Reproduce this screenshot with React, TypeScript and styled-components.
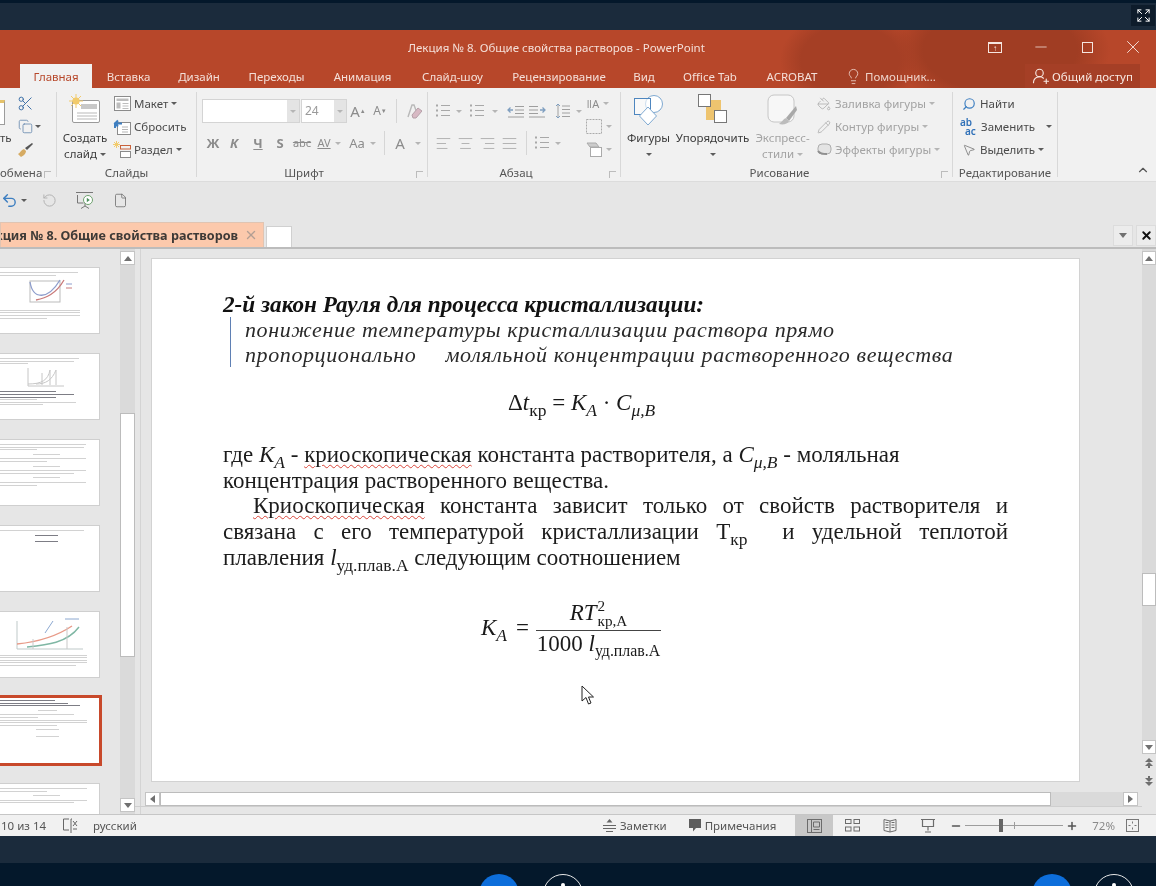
import styled, { createGlobalStyle } from 'styled-components';
import {
  AlignCenter, AlignJustify, AlignLeft, AlignRight, ChevronUp, Copy, Expand, File, Lightbulb,
  Minus, MousePointer2, PaintBucket, Pencil, Plus, RotateCcw, Scissors, Search,
  Undo2, UserRoundPlus, X,
} from 'lucide-react';

const GlobalStyle = createGlobalStyle`
  html, body { margin: 0; padding: 0; background: #04182b; }
  * { box-sizing: border-box; }
`;

const Page = styled.div`
  width: 1156px;
  height: 886px;
  overflow: hidden;
  display: flex;
  flex-direction: column;
  font-family: "Noto Sans", "Open Sans", sans-serif;
  font-size: 11.5px;
  color: #444;
  background: #1b2b3c;
  filter: blur(0.35px);
`;

const TopEdge = styled.div`
  height: 3px;
  background: #04182b;
`;

const MeetingBar = styled.div`
  height: 27px;
  display: flex;
  justify-content: flex-end;
  align-items: flex-start;
  padding: 2px 1px 0 0;
  background: #1b2b3c;
`;

const FullscreenButton = styled.div`
  width: 24px;
  height: 21px;
  display: flex;
  align-items: center;
  justify-content: center;
  background: #0e1c2b;
  color: #fff;
`;

const WindowChrome = styled.div`
  height: 58px;
  display: flex;
  flex-direction: column;
  color: #f4dfd8;
  background:
    radial-gradient(ellipse 70px 50px at 850px 30px, #a53f25 0 70%, transparent 100%),
    radial-gradient(ellipse 110px 60px at 1000px 20px, #a03d23 0 70%, transparent 100%),
    #b7472a;
`;

const TitleBar = styled.div`
  height: 34px;
  display: flex;
  align-items: center;
  padding-left: 408px;
`;

const WindowControls = styled.div`
  margin-left: auto;
  display: flex;
`;

const WindowButton = styled.div`
  width: 46px;
  height: 30px;
  display: flex;
  align-items: center;
  justify-content: center;
  color: #f6e6e0;
`;

const RestoreRibbon = styled.div`
  width: 14px;
  height: 11px;
  border: 1px solid #f6e6e0;
  border-top-width: 2px;
  display: flex;
  align-items: center;
  justify-content: center;
  font-size: 8px;
  line-height: 8px;
`;

const MaximizeBox = styled.div`
  width: 11px;
  height: 11px;
  border: 1px solid #f6e6e0;
`;

const TabsRow = styled.div`
  height: 24px;
  display: flex;
  padding-left: 20px;
`;

const Tab = styled.div<{ $w: number; $active?: boolean }>`
  width: ${(p) => p.$w}px;
  display: flex;
  align-items: center;
  justify-content: center;
  white-space: nowrap;
  ${(p) => p.$active && 'background: #f1f1f1; color: #b7472a;'}
`;

const TellMe = styled.div`
  width: 112px;
  display: flex;
  align-items: center;
  gap: 3px;
  padding-left: 11px;
  color: #eed2c9;
`;

const ShareButton = styled.div`
  margin-left: auto;
  margin-right: 16px;
  width: 115px;
  display: flex;
  align-items: center;
  justify-content: center;
  gap: 2px;
  background: #a53f26;
  color: #f8e8e2;
`;

const Ribbon = styled.div`
  height: 94px;
  display: flex;
  align-items: flex-start;
  padding-top: 4px;
  background: #f1f1f1;
  border-bottom: 1px solid #dcdcdc;
`;

const Group = styled.div<{ $w: number }>`
  position: relative;
  width: ${(p) => p.$w}px;
  height: 85px;
  display: flex;
  flex-direction: column;
  border-right: 1px solid #d8d8d8;
`;

const GroupBody = styled.div<{ $pl?: number }>`
  height: 73px;
  display: flex;
  padding-left: ${(p) => p.$pl ?? 0}px;
`;

const GroupLabel = styled.div<{ $pr?: number }>`
  height: 12px;
  line-height: 16px;
  text-align: center;
  padding-right: ${(p) => p.$pr ?? 0}px;
  white-space: nowrap;
  color: #555;
`;

const ClippedLabel = styled(GroupLabel)`
  text-align: left;
`;

const Launcher = styled.div<{ $r?: number }>`
  position: absolute;
  right: ${(p) => p.$r ?? 4}px;
  bottom: -1px;
  width: 7px;
  height: 7px;
  border-left: 1px solid #bcbcbc;
  border-top: 1px solid #bcbcbc;
`;

const Column = styled.div<{ $w?: number }>`
  ${(p) => p.$w && `width: ${p.$w}px;`}
  display: flex;
  flex-direction: column;
`;

const Row = styled.div<{ $gap?: number; $muted?: boolean }>`
  height: 23px;
  display: flex;
  align-items: center;
  gap: ${(p) => p.$gap ?? 3}px;
  white-space: nowrap;
  color: ${(p) => (p.$muted ? '#a3a3a3' : '#4a4a4a')};
`;

const IconSlot = styled.div<{ $w: number; $ml?: number }>`
  width: ${(p) => p.$w}px;
  margin-left: ${(p) => p.$ml ?? 0}px;
  flex: none;
  display: flex;
  align-items: center;
  justify-content: center;
  svg { flex: none; }
`;

const ClippedText = styled.div`
  height: 16px;
  line-height: 16px;
  margin-top: 5px;
`;

const PastePiece = styled.div`
  width: 5px;
  height: 25px;
  margin-top: 8px;
  background: #fff;
  border: 1px solid #9c9c9c;
  border-left: none;
  border-top: 3px solid #e5c26a;
`;

const BigButton = styled.div<{ $w: number; $muted?: boolean }>`
  width: ${(p) => p.$w}px;
  flex: none;
  display: flex;
  flex-direction: column;
  align-items: center;
  color: ${(p) => (p.$muted ? '#a3a3a3' : '#3c3c3c')};
  line-height: 16px;
  white-space: nowrap;
`;

const BigIcon = styled.div`
  height: 38px;
  padding-top: 2px;
  display: flex;
  align-items: flex-start;
  justify-content: center;
`;

const CaretLine = styled.div`
  height: 16px;
  display: flex;
  align-items: center;
`;

const Caret = styled.span<{ $light?: boolean }>`
  display: inline-block;
  width: 0;
  height: 0;
  border-left: 3px solid transparent;
  border-right: 3px solid transparent;
  border-top: 3px solid ${(p) => (p.$light ? '#b5b5b5' : '#5c5c5c')};
  vertical-align: middle;
`;

const FormatRows = styled.div<{ $w?: number }>`
  ${(p) => p.$w && `width: ${p.$w}px;`}
  display: flex;
  flex-direction: column;
  gap: 8px;
  padding-top: 7px;
`;

const FormatRow = styled.div`
  height: 24px;
  display: flex;
  align-items: center;
  color: #9a9a9a;
`;

const ComboBox = styled.div<{ $w: number; $ml?: number }>`
  width: ${(p) => p.$w}px;
  margin-left: ${(p) => p.$ml ?? 0}px;
  height: 24px;
  flex: none;
  display: flex;
  justify-content: flex-end;
  background: #fff;
  border: 1px solid #d4d4d4;
`;

const ComboValue = styled.div`
  flex: 1;
  padding-left: 3px;
  font-size: 12px;
  line-height: 22px;
  color: #9a9a9a;
`;

const ComboArrow = styled.div`
  width: 12px;
  display: flex;
  align-items: center;
  justify-content: center;
  background: #e4e4e4;
`;

const FormatGlyph = styled.span<{ $size?: number; $bold?: boolean; $italic?: boolean; $under?: boolean; $strike?: boolean }>`
  font-size: ${(p) => p.$size ?? 13}px;
  font-weight: ${(p) => (p.$bold ? 700 : 400)};
  font-style: ${(p) => (p.$italic ? 'italic' : 'normal')};
  text-decoration: ${(p) => (p.$under ? 'underline' : p.$strike ? 'line-through' : 'none')};
  line-height: 14px;
  color: #8c8c8c;
`;

const VSep = styled.div<{ $ml?: number; $h?: number }>`
  width: 1px;
  height: ${(p) => p.$h ?? 24}px;
  margin-left: ${(p) => p.$ml ?? 0}px;
  background: #d6d6d6;
  flex: none;
`;

const SideIcons = styled.div`
  width: 35px;
  display: flex;
  flex-direction: column;
`;

const SideIcon = styled.div`
  height: 23px;
  display: flex;
  align-items: center;
  gap: 4px;
  padding-left: 1px;
`;

const ReplaceGlyph = styled.div`
  width: 18px;
  font-size: 10px;
  line-height: 9px;
  font-weight: 600;
  color: #2f70b8;
  flex: none;
`;

const ReplaceSecond = styled.div`
  padding-left: 5px;
`;

const FlippedSearch = styled(Search)`
  transform: scaleX(-1);
`;

const CollapseArea = styled.div`
  flex: 1;
  height: 85px;
  display: flex;
  align-items: flex-end;
  justify-content: flex-end;
  padding-right: 6px;
  color: #555;
`;

const QuickBar = styled.div`
  height: 40px;
  display: flex;
  align-items: center;
  padding-bottom: 4px;
  background: #e6e6e6;
  color: #6c6c6c;
`;

const DocTabs = styled.div`
  height: 27px;
  display: flex;
  align-items: flex-end;
  background: #e6e6e6;
  border-bottom: 2px solid #bcbcbc;
`;

const DocTab = styled.div`
  width: 264px;
  height: 25px;
  display: flex;
  justify-content: flex-end;
  align-items: center;
  gap: 6px;
  padding-right: 5px;
  overflow: hidden;
  white-space: nowrap;
  background: #fcc9ac;
  border: 1px solid #e0c4b2;
  border-bottom: none;
  font-weight: 700;
  font-size: 12.6px;
  color: #3e3a37;
  svg { flex: none; }
`;

const NewDocTab = styled.div`
  width: 26px;
  height: 21px;
  margin-left: 2px;
  background: #fff;
  border: 1px solid #d0d0d0;
  border-bottom: none;
`;

const DocTabButton = styled.div<{ $first?: boolean }>`
  width: 20px;
  height: 21px;
  margin-left: ${(p) => (p.$first ? 'auto' : '3px')};
  margin-bottom: 1px;
  display: flex;
  align-items: center;
  justify-content: center;
  background: #ececec;
  border: 1px solid #dcdcdc;
  color: #111;
`;

const Workspace = styled.div`
  height: 565px;
  display: flex;
  background: #e6e6e6;
`;

const ThumbPanel = styled.div`
  width: 120px;
  flex: none;
  overflow: hidden;
  display: flex;
  flex-direction: column;
  gap: 19px;
  padding-top: 18px;
`;

const Thumb = styled.div<{ $selected?: boolean }>`
  flex: none;
  height: ${(p) => (p.$selected ? 71 : 67)}px;
  width: ${(p) => (p.$selected ? 102 : 100)}px;
  margin: ${(p) => (p.$selected ? '-2px 0' : 0)};
  padding: ${(p) => (p.$selected ? '2px 4px 0 0' : '4px 6px 0 0')};
  background: #fff;
  border: ${(p) => (p.$selected ? '3px solid #c8492b' : '1px solid #cfcfcf')};
  border-left: none;
  overflow: hidden;
  display: flex;
  flex-direction: column;
  gap: 1.6px;
`;

const ThumbLine = styled.div<{ $w: number; $dark?: boolean; $center?: boolean }>`
  height: 1px;
  flex: none;
  width: ${(p) => p.$w}%;
  ${(p) => p.$center && 'margin: 2px auto;'}
  background: ${(p) => (p.$dark ? '#7d7d85' : '#d2d2d2')};
  filter: blur(0.4px);
`;

const ThumbChart = styled.svg`
  flex: none;
  display: block;
  margin: 1px auto;
  filter: blur(0.4px);
`;

const ScrollTrack = styled.div<{ $w?: number }>`
  width: ${(p) => p.$w ?? 15}px;
  flex: none;
  display: flex;
  flex-direction: column;
  background: #dadada;
`;

const ScrollSpacer = styled.div`
  flex: 1;
`;

const ScrollButton = styled.div<{ $spaced?: boolean }>`
  height: 14px;
  flex: none;
  display: flex;
  align-items: center;
  justify-content: center;
  background: #fff;
  border: 1px solid #c4c4c4;
  margin: ${(p) => (p.$spaced ? '2px 0' : 0)};
`;

const ScrollThumb = styled.div<{ $h: number; $mt: number }>`
  height: ${(p) => p.$h}px;
  margin-top: ${(p) => p.$mt}px;
  flex: none;
  background: #fff;
  border: 1px solid #bcbcbc;
`;

const SlideNav = styled.div`
  height: 60px;
  flex: none;
  display: flex;
  flex-direction: column;
  align-items: center;
  gap: 8px;
  padding-top: 4px;
  background: #e6e6e6;
`;

const Arrow = styled.span<{ $dir: 'up' | 'down' | 'left' | 'right' }>`
  width: 0;
  height: 0;
  ${(p) => ((p.$dir === 'up' || p.$dir === 'down')
    ? `border-left: 4px solid transparent; border-right: 4px solid transparent;
       border-${p.$dir === 'up' ? 'bottom' : 'top'}: 5px solid #707070;`
    : `border-top: 4px solid transparent; border-bottom: 4px solid transparent;
       border-${p.$dir === 'left' ? 'right' : 'left'}: 5px solid #707070;`)}
`;

const Splitter = styled.div`
  width: 10px;
  flex: none;
  display: flex;
  justify-content: center;
  &::after {
    content: '';
    width: 1px;
    background: #d4d4d4;
  }
`;

const SlideColumn = styled.div`
  width: 997px;
  flex: none;
  display: flex;
  flex-direction: column;
  padding-top: 9px;
`;

const Slide = styled.div`
  position: relative;
  width: 929px;
  height: 524px;
  margin-left: 6px;
  padding: 33px 71px 0;
  background: #fff;
  border: 1px solid #d2d2d2;
  color: #1a1a1a;
  font-family: "Liberation Serif", "Times New Roman", serif;
`;

const Heading = styled.div`
  font-size: 23.2px;
  line-height: 25px;
  font-weight: 700;
  font-style: italic;
  color: #111;
  white-space: nowrap;
`;

const Statement = styled.div`
  margin-left: 7px;
  padding-left: 14px;
  border-left: 1px solid #5f80b4;
  font-size: 22px;
  line-height: 25px;
  font-style: italic;
  letter-spacing: 0.6px;
  color: #2a2a2a;
  white-space: nowrap;
`;

const Gap = styled.span`
  display: inline-block;
  width: 29px;
`;

const FormulaRow = styled.div<{ $ml: number; $mt: number }>`
  display: flex;
  align-items: center;
  margin-left: ${(p) => p.$ml}px;
  margin-top: ${(p) => p.$mt}px;
  font-size: 23px;
  line-height: 24px;
  white-space: nowrap;
`;

const Body = styled.div`
  margin-top: 27px;
  font-size: 23px;
  line-height: 25.7px;
  color: #1c1c1c;
`;

const BodyLine = styled.div<{ $justify?: boolean; $indent?: boolean }>`
  height: 25.7px;
  white-space: ${(p) => (p.$justify ? 'normal' : 'nowrap')};
  text-align: ${(p) => (p.$justify ? 'justify' : 'left')};
  text-align-last: ${(p) => (p.$justify ? 'justify' : 'left')};
  text-indent: ${(p) => (p.$indent ? '30px' : 0)};
`;

const Spell = styled.span`
  text-decoration: underline wavy #d9453a 1px;
  text-underline-offset: 2px;
`;

const MathVar = styled.i`
  font-style: italic;
`;

const Sub = styled.sub`
  font-size: 0.76em;
  line-height: 0;
  vertical-align: -0.32em;
`;

const FracSub = styled(Sub)`
  font-size: 0.69em;
`;

const SubSup = styled.span`
  display: inline-flex;
  flex-direction: column;
  margin-left: 1px;
  font-size: 0.66em;
  line-height: 15px;
`;

const FormulaLead = styled.div`
  padding-top: 5px;
`;

const FormulaEq = styled.span`
  margin-left: 9px;
`;

const Fraction = styled.div`
  display: flex;
  flex-direction: column;
  align-items: center;
  margin-left: 7px;
  width: 125px;
`;

const Numerator = styled.div`
  width: 100%;
  height: 37px;
  padding-top: 2px;
  display: flex;
  align-items: center;
  justify-content: center;
  border-bottom: 1px solid #444;
`;

const Denominator = styled.div`
  padding-top: 1px;
`;

const Pointer = styled.div`
  position: absolute;
  left: 429px;
  top: 426px;
  line-height: 0;
`;

const HScroll = styled.div`
  height: 14px;
  width: 993px;
  margin-top: 10px;
  display: flex;
  background: #dadada;
`;

const HButton = styled(ScrollButton)`
  width: 15px;
  height: 14px;
`;

const HThumb = styled.div`
  width: 891px;
  background: #fff;
  border: 1px solid #bcbcbc;
`;

const HRest = styled.div`
  flex: 1;
`;

const HRule = styled.div`
  margin-left: -10px;
  width: 1030px;
  height: 1px;
  background: #cfcfcf;
`;

const StatusBar = styled.div`
  height: 22px;
  display: flex;
  align-items: center;
  background: #f1f1f1;
  border-top: 1px solid #c6c6c6;
  color: #555;
  white-space: nowrap;
`;

const StatusText = styled.div<{ $ml?: number }>`
  margin-left: ${(p) => p.$ml ?? 0}px;
`;

const StatusRight = styled.div`
  margin-left: auto;
  height: 100%;
  display: flex;
  align-items: center;
  padding-right: 17px;
`;

const ViewButton = styled.div<{ $active?: boolean; $ml?: number }>`
  width: 38px;
  height: 100%;
  margin-left: ${(p) => p.$ml ?? 0}px;
  display: flex;
  align-items: center;
  justify-content: center;
  background: ${(p) => (p.$active ? '#c8c8c8' : 'transparent')};
`;

const ZoomSlider = styled.div`
  position: relative;
  width: 98px;
  height: 1px;
  background: #9d9d9d;
`;

const ZoomKnob = styled.div`
  position: absolute;
  left: 34px;
  top: -6px;
  width: 4px;
  height: 13px;
  background: #666;
`;

const ZoomTick = styled.div`
  position: absolute;
  left: 49px;
  top: -3px;
  width: 1px;
  height: 7px;
  background: #9d9d9d;
`;

const ZoomPct = styled.div`
  margin-left: 12px;
  margin-right: 11px;
  color: #8a8a8a;
`;

const BottomBand = styled.div`
  height: 27px;
  background: #1b2b3c;
`;

const Dock = styled.div`
  height: 23px;
  overflow: hidden;
  display: flex;
  padding: 11px 0 0 479px;
  background: #04182b;
`;

const DockCircle = styled.div<{ $ring?: boolean; $ml: number }>`
  position: relative;
  width: 40px;
  height: 40px;
  flex: none;
  margin-left: ${(p) => p.$ml}px;
  border-radius: 50%;
  background: ${(p) => (p.$ring ? 'transparent' : '#0d6edb')};
  border: ${(p) => (p.$ring ? '1px solid #e8e8e8' : 'none')};
  ${(p) => p.$ring && `&::after {
    content: '';
    position: absolute;
    left: 17px;
    top: 8px;
    width: 4px;
    height: 4px;
    border-radius: 50%;
    background: #fff;
  }`}
`;

/* ribbon drawings */

const LinesIcon = ({ w = 14, rows = 3 }: { w?: number; rows?: number }) => (
  <svg width={w} height={rows * 5} stroke="#a8a8a8" strokeWidth="1">
    {Array.from({ length: rows }).map((_, i) => (
      <g key={i}>
        <line x1="0" x2="2" y1={i * 5 + 1.5} y2={i * 5 + 1.5} strokeWidth="2" />
        <line x1="5" x2={w} y1={i * 5 + 1.5} y2={i * 5 + 1.5} />
      </g>
    ))}
  </svg>
);

const IndentIcon = ({ flip }: { flip?: boolean }) => (
  <svg width="17" height="13" stroke="#9e9e9e" fill="none" transform={flip ? 'scale(-1 1)' : undefined}>
    <path d="M8 1.5h9M8 5h9M8 8.5h9M1 12h16" />
    <path d="M1 5h5M3.5 2.5L1 5l2.5 2.5" stroke="#7f9fc0" strokeWidth="1.3" />
  </svg>
);

const SpacingIcon = () => (
  <svg width="15" height="16" stroke="#a0a0a0" fill="none">
    <path d="M7 3h8M7 6.5h8M7 10h8M7 13.5h8M3 1v14" />
    <path d="M1 3l2-2 2 2M1 13l2 2 2-2" stroke="#7f9fc0" />
  </svg>
);

const ClearFormatIcon = () => (
  <svg width="17" height="17">
    <path d="M3 14L7 2h2l3 8" fill="none" stroke="#b9b9b9" strokeWidth="1.4" />
    <path d="M7 12l6-7 4 3-6 7H8z" fill="#d8b9c4" stroke="#b5a0a8" />
  </svg>
);

const NewSlideIcon = () => (
  <svg width="32" height="29">
    <rect x="3.5" y="6.5" width="27" height="22" rx="1.5" fill="#fff" stroke="#9a9a9a" />
    <rect x="12" y="10" width="16" height="5" fill="#c8c8c8" />
    <path d="M8 19h20M8 22h20M8 25h20" stroke="#b9b9b9" />
    <circle cx="7" cy="7" r="3.6" fill="#f2cb6c" />
    <path d="M7 0v14M0 7h14M2 2l10 10M12 2L2 12" stroke="#f2cb6c" />
  </svg>
);

const LayoutIcon = () => (
  <svg width="17" height="15" fill="#fff" stroke="#8b8b8b">
    <rect x="0.5" y="0.5" width="16" height="14" />
    <rect x="2.5" y="2.5" width="12" height="2.5" fill="#bdbdbd" stroke="none" />
    <rect x="2.5" y="6.5" width="4" height="6" fill="#bdbdbd" stroke="none" />
    <path d="M8.5 7.5h6M8.5 10h6M8.5 12.5h6" stroke="#bdbdbd" />
  </svg>
);

const ResetIcon = () => (
  <svg width="18" height="16" fill="none">
    <rect x="4.5" y="3.5" width="13" height="12" fill="#fff" stroke="#8b8b8b" />
    <path d="M9 8h6M9 10.5h6M9 13h6" stroke="#b5b5b5" />
    <path d="M2 9V4.5h7M5 1.5L2 4.5l3 3" stroke="#3e7fc1" strokeWidth="2" />
  </svg>
);

const SectionIcon = () => (
  <svg width="18" height="17" fill="none">
    <rect x="7.5" y="4.5" width="10" height="3.5" stroke="#c9623c" />
    <rect x="7.5" y="10.5" width="10" height="6" fill="#fff" stroke="#8b8b8b" />
    <circle cx="3.5" cy="3.5" r="1.8" fill="#f2cb6c" />
    <path d="M3.5 0v7M0 3.5h7M1 1l5 5M6 1L1 6" stroke="#f2cb6c" />
  </svg>
);

const ShapesIcon = () => (
  <svg width="31" height="32" fill="none">
    <circle cx="21" cy="10" r="8.5" fill="#fff" stroke="#7fa9d1" />
    <rect x="1.5" y="4.5" width="16" height="16" fill="#fff" fillOpacity="0.6" stroke="#4e86bf" />
    <path d="M15 13l8.5 9-8.5 9-8.5-9z" fill="#fff" stroke="#7fa9d1" />
  </svg>
);

const ArrangeIcon = () => (
  <svg width="29" height="30">
    <rect x="8" y="6" width="15" height="20" fill="#eec46f" />
    <rect x="0.5" y="0.5" width="12" height="12" fill="#fff" stroke="#777" />
    <rect x="16.5" y="16.5" width="12" height="12" fill="#fff" stroke="#777" />
  </svg>
);

const QuickStyleIcon = () => (
  <svg width="31" height="32" fill="none">
    <rect x="1" y="1" width="26" height="27" rx="6" fill="#f7f7f7" stroke="#c6c6c6" />
    <path d="M29 12L19 24l3 3 8-11z" fill="#a9a9a9" />
    <path d="M19 24c-3 1-4 4-7 6 4 1 9 0 10-3z" fill="#bcbcbc" />
  </svg>
);

const EffectsIcon = () => (
  <svg width="15" height="13">
    <rect x="1" y="1" width="13" height="10" rx="4" fill="#e4e4e4" stroke="#adadad" />
    <path d="M1 8c2 3 5 3 9 3" stroke="#8f8f8f" strokeWidth="2" fill="none" />
  </svg>
);

const SpellIcon = () => (
  <svg width="16" height="15" fill="none" stroke="#666">
    <path d="M7 1H1.5v11H7M10 1H9v12M8 14h2" />
    <path d="M11 3l4 5M15 3l-4 5M11 11h4" />
  </svg>
);

const NotesIcon = () => (
  <svg width="13" height="13" fill="none" stroke="#666">
    <path d="M0 6.5h13M0 9.5h13M3 12.5h7" />
    <path d="M6.5 0l3 3.5h-6z" fill="#666" stroke="none" />
  </svg>
);

const CommentIcon = () => (
  <svg width="12" height="13">
    <path d="M0 0h12v9H7l-3 3.5V9H0z" fill="#5d5d5d" />
  </svg>
);

const NormalViewIcon = () => (
  <svg width="15" height="14" fill="none" stroke="#6c6c6c">
    <rect x="0.5" y="0.5" width="14" height="13" />
    <path d="M4.5 0.5v13M6.5 3h6v5h-6zM6.5 10.5h6" />
  </svg>
);

const SorterIcon = () => (
  <svg width="15" height="13" fill="none" stroke="#6c6c6c">
    <rect x="0.5" y="0.5" width="5.5" height="4" />
    <rect x="9" y="0.5" width="5.5" height="4" />
    <rect x="0.5" y="8" width="5.5" height="4" />
    <rect x="9" y="8" width="5.5" height="4" />
  </svg>
);

const ReaderIcon = () => (
  <svg width="14" height="14" fill="none" stroke="#6c6c6c">
    <path d="M7 2L1 .5v11L7 13l6-1.5V.5z" />
    <path d="M7 2v11M2.5 3.5H5.5M2.5 6H5.5M2.5 8.5H5.5M8.5 3.5H11.5M8.5 6H11.5M8.5 8.5H11.5" />
  </svg>
);

const ShowIcon = () => (
  <svg width="14" height="14" fill="none" stroke="#6c6c6c">
    <path d="M0 .5h14M1.5 .5v7h11v-7M7 7.5v4M4 13h6" strokeWidth="1.2" />
  </svg>
);

const FitIcon = () => (
  <svg width="13" height="13" fill="none" stroke="#777">
    <rect x="0.5" y="0.5" width="12" height="12" />
    <path d="M6.5 2.5v2M6.5 8.5v2M2.5 6.5h2M8.5 6.5h2" />
  </svg>
);

const PresenterIcon = () => (
  <svg width="18" height="17" fill="none" stroke="#777">
    <path d="M0 .5h17M1.5 3v8h6M9 11v3M5 16.5l4-2.5 4 2.5" />
    <circle cx="12" cy="8" r="4.5" fill="#fff" stroke="#6fa26f" />
    <path d="M10.8 5.8l3 2.2-3 2.2z" fill="#4d8f5d" stroke="none" />
  </svg>
);

const PrevSlideIcon = () => (
  <svg width="10" height="10" fill="#6f6f6f">
    <path d="M5 0l4 4H1zM5 4l4 4H1z" />
    <rect x="4" y="7" width="2" height="3" />
  </svg>
);

const NextSlideIcon = () => (
  <svg width="10" height="10" fill="#6f6f6f">
    <rect x="4" y="0" width="2" height="3" />
    <path d="M1 2h8l-4 4zM1 6h8l-4 4z" />
  </svg>
);

const CursorIcon = () => (
  <svg width="14" height="21">
    <path d="M1 1v15l4-3.5 2.5 6.5 2.5-1-2.5-6h5z" fill="#fff" stroke="#222" />
  </svg>
);

const ChartA = () => (
  <ThumbChart width="62" height="29" fill="none">
    <rect x="14" y="3" width="30" height="21" stroke="#bbb" />
    <path d="M14 4c3 18 18 18 30-2" stroke="#8d9dcc" strokeWidth="1.3" />
    <path d="M20 22c10-2 20-6 28-20" stroke="#c97a7a" strokeWidth="1.3" />
    <path d="M50 6h6" stroke="#8d9dcc" /><path d="M50 10h6" stroke="#c97a7a" />
  </ThumbChart>
);

const ChartB = () => (
  <ThumbChart width="42" height="22" fill="none" stroke="#c6c6c6">
    <path d="M2 1v18h36M2 17c14 0 20-4 22-14M10 17c10 0 16-4 20-14M16 18V6M24 18V3M30 18V3" />
  </ThumbChart>
);

const ChartC = () => (
  <ThumbChart width="84" height="35" fill="none">
    <path d="M12 4v28h66" stroke="#bfc9c9" />
    <path d="M12 27c20-2 40-8 55-18" stroke="#e89a88" strokeWidth="1.4" />
    <path d="M22 30c20-2 40-4 52-20" stroke="#7fb7a4" strokeWidth="1.4" />
    <path d="M40 16l8-12M60 2h14" stroke="#8ca8d0" />
    <path d="M28 22v10M62 10v22" stroke="#c9c9c9" />
  </ThumbChart>
);

type ThumbRow = { w: number; dark?: boolean; center?: boolean };

const line = (w: number, dark?: boolean, center?: boolean): ThumbRow => ({ w, dark, center });

function ThumbCard({ top, chart, bottom, selected }: { top: ThumbRow[]; chart?: React.ReactNode; bottom?: ThumbRow[]; selected?: boolean }) {
  const draw = (rows: ThumbRow[], prefix: string) => rows.map((r, i) => (
    <ThumbLine key={prefix + i} $w={r.w} $dark={r.dark} $center={r.center} />
  ));
  return (
    <Thumb $selected={selected}>
      {draw(top, 't')}
      {chart}
      {bottom && draw(bottom, 'b')}
    </Thumb>
  );
}

const tabs: [string, number][] = [
  ['Вставка', 73], ['Дизайн', 68], ['Переходы', 87], ['Анимация', 85], ['Слайд-шоу', 95],
  ['Рецензирование', 118], ['Вид', 52], ['Office Tab', 80], ['ACROBAT', 84],
];

export default function App() {
  return (
    <Page>
      <GlobalStyle />
      <TopEdge />
      <MeetingBar>
        <FullscreenButton><Expand size={15} strokeWidth={1.6} /></FullscreenButton>
      </MeetingBar>

      <WindowChrome>
        <TitleBar>
          Лекция № 8. Общие свойства растворов - PowerPoint
          <WindowControls>
            <WindowButton><RestoreRibbon>↑</RestoreRibbon></WindowButton>
            <WindowButton><Minus size={18} strokeWidth={1} /></WindowButton>
            <WindowButton><MaximizeBox /></WindowButton>
            <WindowButton><X size={22} strokeWidth={1} /></WindowButton>
          </WindowControls>
        </TitleBar>

        <TabsRow>
          <Tab $w={72} $active>Главная</Tab>
          {tabs.map(([name, w]) => <Tab key={name} $w={w}>{name}</Tab>)}
          <TellMe><Lightbulb size={17} strokeWidth={1.2} />Помощник...</TellMe>
          <ShareButton><UserRoundPlus size={18} strokeWidth={1.5} />Общий доступ</ShareButton>
        </TabsRow>
      </WindowChrome>

      <Ribbon>
        <Group $w={57}>
          <GroupBody>
            <Column $w={18}>
              <PastePiece />
              <ClippedText>ть</ClippedText>
            </Column>
            <Column>
              <Row><IconSlot $w={14}><Scissors size={17} strokeWidth={1.4} color="#3e70a8" /></IconSlot></Row>
              <Row><IconSlot $w={14}><Copy size={15} strokeWidth={1.2} color="#5a7fa8" /></IconSlot><Caret /></Row>
              <Row><IconSlot $w={14}><svg width="16" height="16"><path d="M7 7c-3 1-4 4-6 5l3 3c2-1 5-3 5-6z" fill="#d6ab63" /><path d="M15 1L8 6l2 2 6-6z" fill="#555" /></svg></IconSlot></Row>
            </Column>
          </GroupBody>
          <ClippedLabel>обмена</ClippedLabel>
          <Launcher $r={5} />
        </Group>

        <Group $w={140}>
          <GroupBody>
            <BigButton $w={56}>
              <BigIcon><NewSlideIcon /></BigIcon>
              Создать
              <div>слайд <Caret /></div>
            </BigButton>
            <Column>
              <Row><IconSlot $w={18}><LayoutIcon /></IconSlot>Макет <Caret /></Row>
              <Row><IconSlot $w={18}><ResetIcon /></IconSlot>Сбросить</Row>
              <Row><IconSlot $w={18}><SectionIcon /></IconSlot>Раздел <Caret /></Row>
            </Column>
          </GroupBody>
          <GroupLabel>Слайды</GroupLabel>
        </Group>

        <Group $w={231}>
          <GroupBody $pl={5}>
            <FormatRows>
              <FormatRow>
                <ComboBox $w={98}><ComboValue /><ComboArrow><Caret $light /></ComboArrow></ComboBox>
                <ComboBox $w={46} $ml={1}><ComboValue>24</ComboValue><ComboArrow><Caret $light /></ComboArrow></ComboBox>
                <IconSlot $w={22}><FormatGlyph $size={15}>A</FormatGlyph><FormatGlyph $size={6}>▲</FormatGlyph></IconSlot>
                <IconSlot $w={22}><FormatGlyph $size={12}>A</FormatGlyph><FormatGlyph $size={6}>▼</FormatGlyph></IconSlot>
                <VSep $ml={5} />
                <IconSlot $w={32}><ClearFormatIcon /></IconSlot>
              </FormatRow>
              <FormatRow>
                <IconSlot $w={22}><FormatGlyph $bold>Ж</FormatGlyph></IconSlot>
                <IconSlot $w={20}><FormatGlyph $bold $italic>К</FormatGlyph></IconSlot>
                <IconSlot $w={28}><FormatGlyph $bold $under>Ч</FormatGlyph></IconSlot>
                <IconSlot $w={16}><FormatGlyph $bold>S</FormatGlyph></IconSlot>
                <IconSlot $w={28}><FormatGlyph $size={11} $strike>abc</FormatGlyph></IconSlot>
                <IconSlot $w={16}><FormatGlyph $size={11} $under>AV</FormatGlyph></IconSlot>
                <IconSlot $w={12}><Caret $light /></IconSlot>
                <IconSlot $w={26}><FormatGlyph>Aa</FormatGlyph></IconSlot>
                <IconSlot $w={6}><Caret $light /></IconSlot>
                <VSep $ml={8} />
                <IconSlot $w={30}><FormatGlyph $size={15}>A</FormatGlyph></IconSlot>
                <IconSlot $w={6}><Caret $light /></IconSlot>
              </FormatRow>
            </FormatRows>
          </GroupBody>
          <GroupLabel $pr={16}>Шрифт</GroupLabel>
          <Launcher />
        </Group>

        <Group $w={193}>
          <GroupBody $pl={8}>
            <FormatRows $w={150}>
              <FormatRow>
                <IconSlot $w={14}><LinesIcon /></IconSlot>
                <IconSlot $w={18}><Caret $light /></IconSlot>
                <IconSlot $w={18}><LinesIcon /></IconSlot>
                <IconSlot $w={18}><Caret $light /></IconSlot>
                <IconSlot $w={22}><IndentIcon /></IconSlot>
                <IconSlot $w={22}><IndentIcon flip /></IconSlot>
                <IconSlot $w={28}><SpacingIcon /></IconSlot>
                <IconSlot $w={6}><Caret $light /></IconSlot>
              </FormatRow>
              <FormatRow>
                <IconSlot $w={14}><AlignLeft size={17} strokeWidth={1} color="#9a9a9a" /></IconSlot>
                <IconSlot $w={30}><AlignCenter size={17} strokeWidth={1} color="#9a9a9a" /></IconSlot>
                <IconSlot $w={15}><AlignRight size={17} strokeWidth={1} color="#9a9a9a" /></IconSlot>
                <IconSlot $w={29}><AlignJustify size={17} strokeWidth={1} color="#9a9a9a" /></IconSlot>
                <VSep $ml={2} />
                <IconSlot $w={30}><LinesIcon /></IconSlot>
                <IconSlot $w={1}><Caret $light /></IconSlot>
              </FormatRow>
            </FormatRows>
            <SideIcons>
              <SideIcon><FormatGlyph $size={11}>ǁA</FormatGlyph><Caret $light /></SideIcon>
              <SideIcon><svg width="16" height="15" fill="none" stroke="#aaa" strokeDasharray="2 1"><rect x="0.5" y="0.5" width="15" height="14" /></svg><Caret $light /></SideIcon>
              <SideIcon><svg width="16" height="15" fill="none" stroke="#aaa"><path d="M1 1h9l3 4H4z" fill="#ccc" /><rect x="4.5" y="5.5" width="11" height="9" fill="#fff" /></svg><Caret $light /></SideIcon>
            </SideIcons>
          </GroupBody>
          <GroupLabel $pr={16}>Абзац</GroupLabel>
          <Launcher />
        </Group>

        <Group $w={332}>
          <GroupBody>
            <BigButton $w={55}>
              <BigIcon><ShapesIcon /></BigIcon>
              Фигуры
              <CaretLine><Caret /></CaretLine>
            </BigButton>
            <BigButton $w={73}>
              <BigIcon><ArrangeIcon /></BigIcon>
              Упорядочить
              <CaretLine><Caret /></CaretLine>
            </BigButton>
            <BigButton $w={67} $muted>
              <BigIcon><QuickStyleIcon /></BigIcon>
              Экспресс-
              <div>стили <Caret $light /></div>
            </BigButton>
            <Column>
              <Row $muted><IconSlot $w={16}><PaintBucket size={14} strokeWidth={1.2} /></IconSlot>Заливка фигуры <Caret $light /></Row>
              <Row $muted><IconSlot $w={16}><Pencil size={14} strokeWidth={1.2} /></IconSlot>Контур фигуры <Caret $light /></Row>
              <Row $muted><IconSlot $w={16}><EffectsIcon /></IconSlot>Эффекты фигуры <Caret $light /></Row>
            </Column>
          </GroupBody>
          <GroupLabel $pr={14}>Рисование</GroupLabel>
          <Launcher />
        </Group>

        <Group $w={105}>
          <GroupBody $pl={7}>
            <Column>
              <Row><IconSlot $w={17}><FlippedSearch size={14} strokeWidth={2} color="#3e7fc1" /></IconSlot>Найти</Row>
              <Row>
                <ReplaceGlyph>ab<ReplaceSecond>ac</ReplaceSecond></ReplaceGlyph>
                Заменить
                <IconSlot $w={22}><Caret /></IconSlot>
              </Row>
              <Row><IconSlot $w={17}><MousePointer2 size={14} strokeWidth={1.2} color="#666" /></IconSlot>Выделить <Caret /></Row>
            </Column>
          </GroupBody>
          <GroupLabel>Редактирование</GroupLabel>
        </Group>

        <CollapseArea><ChevronUp size={14} strokeWidth={2} /></CollapseArea>
      </Ribbon>

      <QuickBar>
        <IconSlot $w={18}><Undo2 size={17} strokeWidth={2} color="#3e7fc1" /></IconSlot>
        <IconSlot $w={12}><Caret /></IconSlot>
        <IconSlot $w={38}><RotateCcw size={15} strokeWidth={1.6} color="#b3b3b3" /></IconSlot>
        <IconSlot $w={34}><PresenterIcon /></IconSlot>
        <IconSlot $w={36}><File size={15} strokeWidth={1.2} color="#666" /></IconSlot>
      </QuickBar>

      <DocTabs>
        <DocTab>
          Лекция № 8. Общие свойства растворов
          <X size={14} strokeWidth={2.4} color="#b39f93" />
        </DocTab>
        <NewDocTab />
        <DocTabButton $first><Arrow $dir="down" /></DocTabButton>
        <DocTabButton><X size={13} strokeWidth={3.5} /></DocTabButton>
      </DocTabs>

      <Workspace>
        <ThumbPanel>
          <ThumbCard top={[line(84), line(60)]} chart={<ChartA />} bottom={[line(86), line(86), line(86), line(50)]} />
          <ThumbCard top={[line(85), line(80), line(30)]} chart={<ChartB />} bottom={[line(60, true), line(80, true), line(60, true), line(40), line(82), line(46)]} />
          <ThumbCard top={[line(92), line(90), line(40), line(30, false, true), line(92), line(50), line(30, false, true), line(92), line(80), line(30, false, true), line(92), line(40)]} />
          <ThumbCard top={[line(90), line(24, true, true), line(24, true, true)]} />
          <ThumbCard top={[]} chart={<ChartC />} bottom={[line(94), line(94), line(94), line(94), line(82)]} />
          <ThumbCard
            selected
            top={[line(58, true), line(72, true), line(84, true), line(20, false, true), line(78), line(40), line(92), line(92), line(60), line(24, false, true), line(24, false, true)]}
          />
          <ThumbCard top={[line(94), line(50), line(28, false, true), line(94), line(80)]} />
        </ThumbPanel>

        <ScrollTrack>
          <ScrollButton $spaced><Arrow $dir="up" /></ScrollButton>
          <ScrollThumb $h={244} $mt={146} />
          <ScrollSpacer />
          <ScrollButton $spaced><Arrow $dir="down" /></ScrollButton>
        </ScrollTrack>
        <Splitter />

        <SlideColumn>
          <Slide>
            <Heading>2-й закон Рауля для процесса кристаллизации:</Heading>
            <Statement>
              понижение температуры кристаллизации раствора прямо<br />
              пропорционально<Gap />моляльной концентрации растворенного вещества
            </Statement>
            <FormulaRow $ml={285} $mt={24}>
              <span>Δ<MathVar>t</MathVar><Sub>кр</Sub> = <MathVar>K<Sub>A</Sub></MathVar> · <MathVar>C<Sub>μ,B</Sub></MathVar></span>
            </FormulaRow>
            <Body>
              <BodyLine>где <MathVar>K<Sub>A</Sub></MathVar> - <Spell>криоскопическая</Spell> константа растворителя, а <MathVar>C<Sub>μ,B</Sub></MathVar> - моляльная</BodyLine>
              <BodyLine>концентрация растворенного вещества.</BodyLine>
              <BodyLine $justify $indent><Spell>Криоскопическая</Spell> константа зависит только от свойств растворителя и</BodyLine>
              <BodyLine $justify>связана с его температурой кристаллизации Т<Sub>кр</Sub> &nbsp;и удельной теплотой</BodyLine>
              <BodyLine>плавления <MathVar>l</MathVar><Sub>уд.плав.А</Sub> следующим соотношением</BodyLine>
            </Body>
            <FormulaRow $ml={258} $mt={24}>
              <FormulaLead>
                <MathVar>K<Sub>A</Sub></MathVar>
                <FormulaEq>=</FormulaEq>
              </FormulaLead>
              <Fraction>
                <Numerator>
                  <MathVar>RT</MathVar>
                  <SubSup><span>2</span><span>кр,А</span></SubSup>
                </Numerator>
                <Denominator>1000 <MathVar>l</MathVar><FracSub>уд.плав.А</FracSub></Denominator>
              </Fraction>
            </FormulaRow>
            <Pointer><CursorIcon /></Pointer>
          </Slide>
          <HScroll>
            <HButton><Arrow $dir="left" /></HButton>
            <HThumb />
            <HRest />
            <HButton><Arrow $dir="right" /></HButton>
          </HScroll>
          <HRule />
        </SlideColumn>

        <ScrollTrack $w={14}>
          <ScrollButton $spaced><Arrow $dir="up" /></ScrollButton>
          <ScrollThumb $h={33} $mt={306} />
          <ScrollSpacer />
          <ScrollButton><Arrow $dir="down" /></ScrollButton>
          <SlideNav>
            <PrevSlideIcon />
            <NextSlideIcon />
          </SlideNav>
        </ScrollTrack>
      </Workspace>

      <StatusBar>
        <StatusText $ml={1}>10 из 14</StatusText>
        <IconSlot $w={16} $ml={16}><SpellIcon /></IconSlot>
        <StatusText $ml={15}>русский</StatusText>
        <StatusRight>
          <NotesIcon />
          <StatusText $ml={4}>Заметки</StatusText>
          <IconSlot $w={12} $ml={22}><CommentIcon /></IconSlot>
          <StatusText $ml={4}>Примечания</StatusText>
          <ViewButton $active $ml={19}><NormalViewIcon /></ViewButton>
          <ViewButton><SorterIcon /></ViewButton>
          <ViewButton><ReaderIcon /></ViewButton>
          <ViewButton><ShowIcon /></ViewButton>
          <IconSlot $w={18}><Minus size={12} strokeWidth={3} /></IconSlot>
          <ZoomSlider><ZoomKnob /><ZoomTick /></ZoomSlider>
          <IconSlot $w={17}><Plus size={12} strokeWidth={3} /></IconSlot>
          <ZoomPct>72%</ZoomPct>
          <FitIcon />
        </StatusRight>
      </StatusBar>

      <BottomBand />
      <Dock>
        <DockCircle $ml={0} />
        <DockCircle $ring $ml={24} />
        <DockCircle $ml={449} />
        <DockCircle $ring $ml={22} />
      </Dock>
    </Page>
  );
}
